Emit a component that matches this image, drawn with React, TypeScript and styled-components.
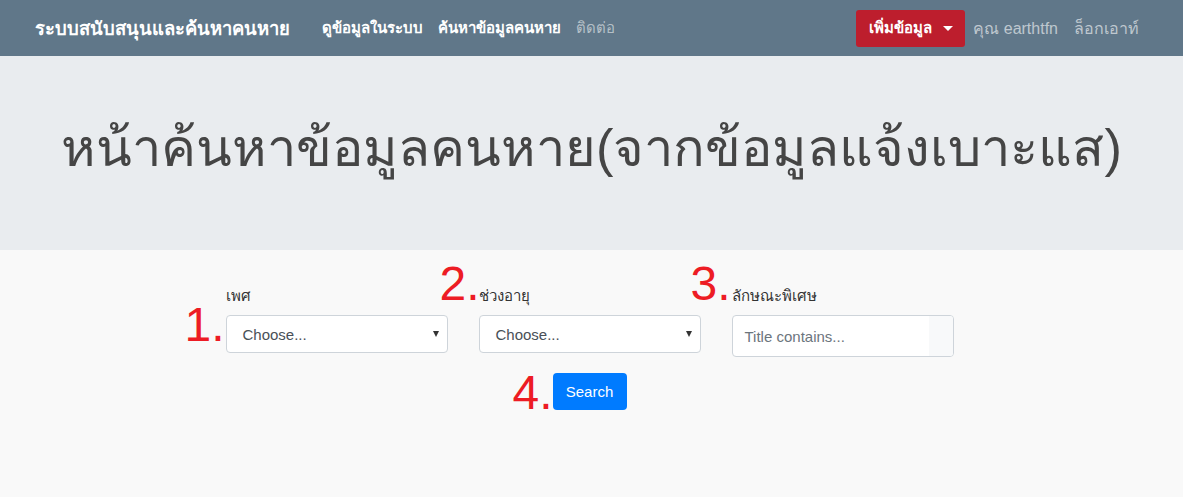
import React from "react";
import styled, { createGlobalStyle } from "styled-components";

const Global = createGlobalStyle`
  * { box-sizing: border-box; }
  body {
    margin: 0;
    background: #f9f9f9;
    font-family: Tahoma, "Liberation Sans", "Noto Sans", "DejaVu Sans", sans-serif;
    color: #212529;
  }
`;

const Navbar = styled.nav`
  height: 56px;
  background: #607789;
  display: flex;
  align-items: center;
  padding: 0 16px 0 35px;
`;

const Brand = styled.div`
  color: #fff;
  font-size: 18.4px;
  font-weight: bold;
  margin-right: 32px;
  white-space: nowrap;
`;

const NavLinks = styled.div`
  display: flex;
  gap: 15px;
  align-items: center;
  flex: 1;
`;

const NavLink = styled.span<{ $muted?: boolean }>`
  color: ${(p) => (p.$muted ? "rgba(255,255,255,0.55)" : "#fff")};
  font-size: 15px;
  font-weight: ${(p) => (p.$muted ? "normal" : "bold")};
  white-space: nowrap;
`;

const RightNav = styled.div`
  display: flex;
  align-items: center;
  gap: 16px;
  margin-right: 28px;
`;

const AddButton = styled.button`
  background: #bd1e2d;
  color: #fff;
  border: none;
  border-radius: 3px;
  height: 37px;
  padding: 0 12px 0 13px;
  font-family: inherit;
  font-size: 15px;
  font-weight: bold;
  display: flex;
  align-items: center;
  gap: 11px;
  margin-right: -8px;
`;

const Caret = styled.span`
  width: 0;
  height: 0;
  border-left: 5px solid transparent;
  border-right: 5px solid transparent;
  border-top: 5px solid #fff;
`;

const UserText = styled.span`
  color: rgba(255, 255, 255, 0.6);
  font-size: 16px;
  white-space: nowrap;
`;

const Jumbotron = styled.header`
  height: 194px;
  background: #e9ecef;
  display: flex;
  align-items: center;
  justify-content: center;
`;

const Title = styled.h1`
  margin: 0;
  font-size: 52.4px;
  font-weight: normal;
  color: #454545;
  padding-bottom: 12px;
`;

const FormSection = styled.section`
  position: relative;
  width: 730px;
  margin: 0 auto;
  padding-top: 36px;
  transform: translateX(-2px);
`;

const FieldGrid = styled.div`
  display: grid;
  grid-template-columns: repeat(3, 222px);
  column-gap: 31px;
  justify-content: center;
`;

const Field = styled.div`
  position: relative;
  display: flex;
  flex-direction: column;
`;

const Label = styled.label`
  font-size: 15px;
  color: #333;
  height: 29px;
  line-height: 20px;
`;

const SelectBox = styled.div`
  height: 38px;
  background: #fff;
  border: 1px solid #ced4da;
  border-radius: 4px;
  display: flex;
  align-items: center;
  justify-content: space-between;
  padding: 0 8px 0 16px;
  font-family: "Liberation Sans", Arial, sans-serif;
  font-size: 15px;
  color: #495057;
`;

const SelectArrow = styled.span`
  width: 0;
  height: 0;
  border-left: 3.5px solid transparent;
  border-right: 3.5px solid transparent;
  border-top: 6px solid #333;
`;

const InputBox = styled.div`
  height: 42px;
  background: #fff;
  border: 1px solid #ced4da;
  border-radius: 4px;
  display: flex;
  align-items: stretch;
  overflow: hidden;
`;

const InputText = styled.div`
  flex: 1;
  display: flex;
  align-items: center;
  padding-left: 12px;
  font-family: "Liberation Sans", Arial, sans-serif;
  font-size: 15px;
  color: #6c757d;
`;

const InputAddon = styled.div`
  width: 24px;
  background: #f8f9fa;
`;

const ButtonRow = styled.div`
  position: relative;
  display: flex;
  justify-content: center;
  margin-top: 16px;
`;

const SearchButton = styled.button`
  background: #007bff;
  color: #fff;
  border: none;
  border-radius: 4px;
  height: 37px;
  width: 74px;
  font-family: "Liberation Sans", Arial, sans-serif;
  font-size: 15px;
  position: relative;
`;

const Marker = styled.span<{ $left: number; $top: number }>`
  position: absolute;
  left: ${(p) => p.$left}px;
  top: ${(p) => p.$top}px;
  color: #ed1c24;
  font-family: "Liberation Sans", Arial, sans-serif;
  font-size: 48px;
  line-height: 1;
  white-space: nowrap;
`;

export default function App() {
  return (
    <>
      <Global />
      <Navbar>
        <Brand>ระบบสนับสนุนและค้นหาคนหาย</Brand>
        <NavLinks>
          <NavLink>ดูข้อมูลในระบบ</NavLink>
          <NavLink>ค้นหาข้อมูลคนหาย</NavLink>
          <NavLink $muted>ติดต่อ</NavLink>
        </NavLinks>
        <RightNav>
          <AddButton>
            เพิ่มข้อมูล <Caret />
          </AddButton>
          <UserText>คุณ earthtfn</UserText>
          <UserText>ล็อกเอาท์</UserText>
        </RightNav>
      </Navbar>
      <Jumbotron>
        <Title>หน้าค้นหาข้อมูลคนหาย(จากข้อมูลแจ้งเบาะแส)</Title>
      </Jumbotron>
      <FormSection>
        <FieldGrid>
          <Field>
            <Marker $left={-41} $top={15}>1.</Marker>
            <Label>เพศ</Label>
            <SelectBox>
              Choose... <SelectArrow />
            </SelectBox>
          </Field>
          <Field>
            <Marker $left={-39} $top={-26}>2.</Marker>
            <Label>ช่วงอายุ</Label>
            <SelectBox>
              Choose... <SelectArrow />
            </SelectBox>
          </Field>
          <Field>
            <Marker $left={-41} $top={-26}>3.</Marker>
            <Label>ลักษณะพิเศษ</Label>
            <InputBox>
              <InputText>Title contains...</InputText>
              <InputAddon />
            </InputBox>
          </Field>
        </FieldGrid>
        <ButtonRow>
          <SearchButton>
            <Marker $left={-40} $top={-4}>4.</Marker>
            Search
          </SearchButton>
        </ButtonRow>
      </FormSection>
    </>
  );
}
